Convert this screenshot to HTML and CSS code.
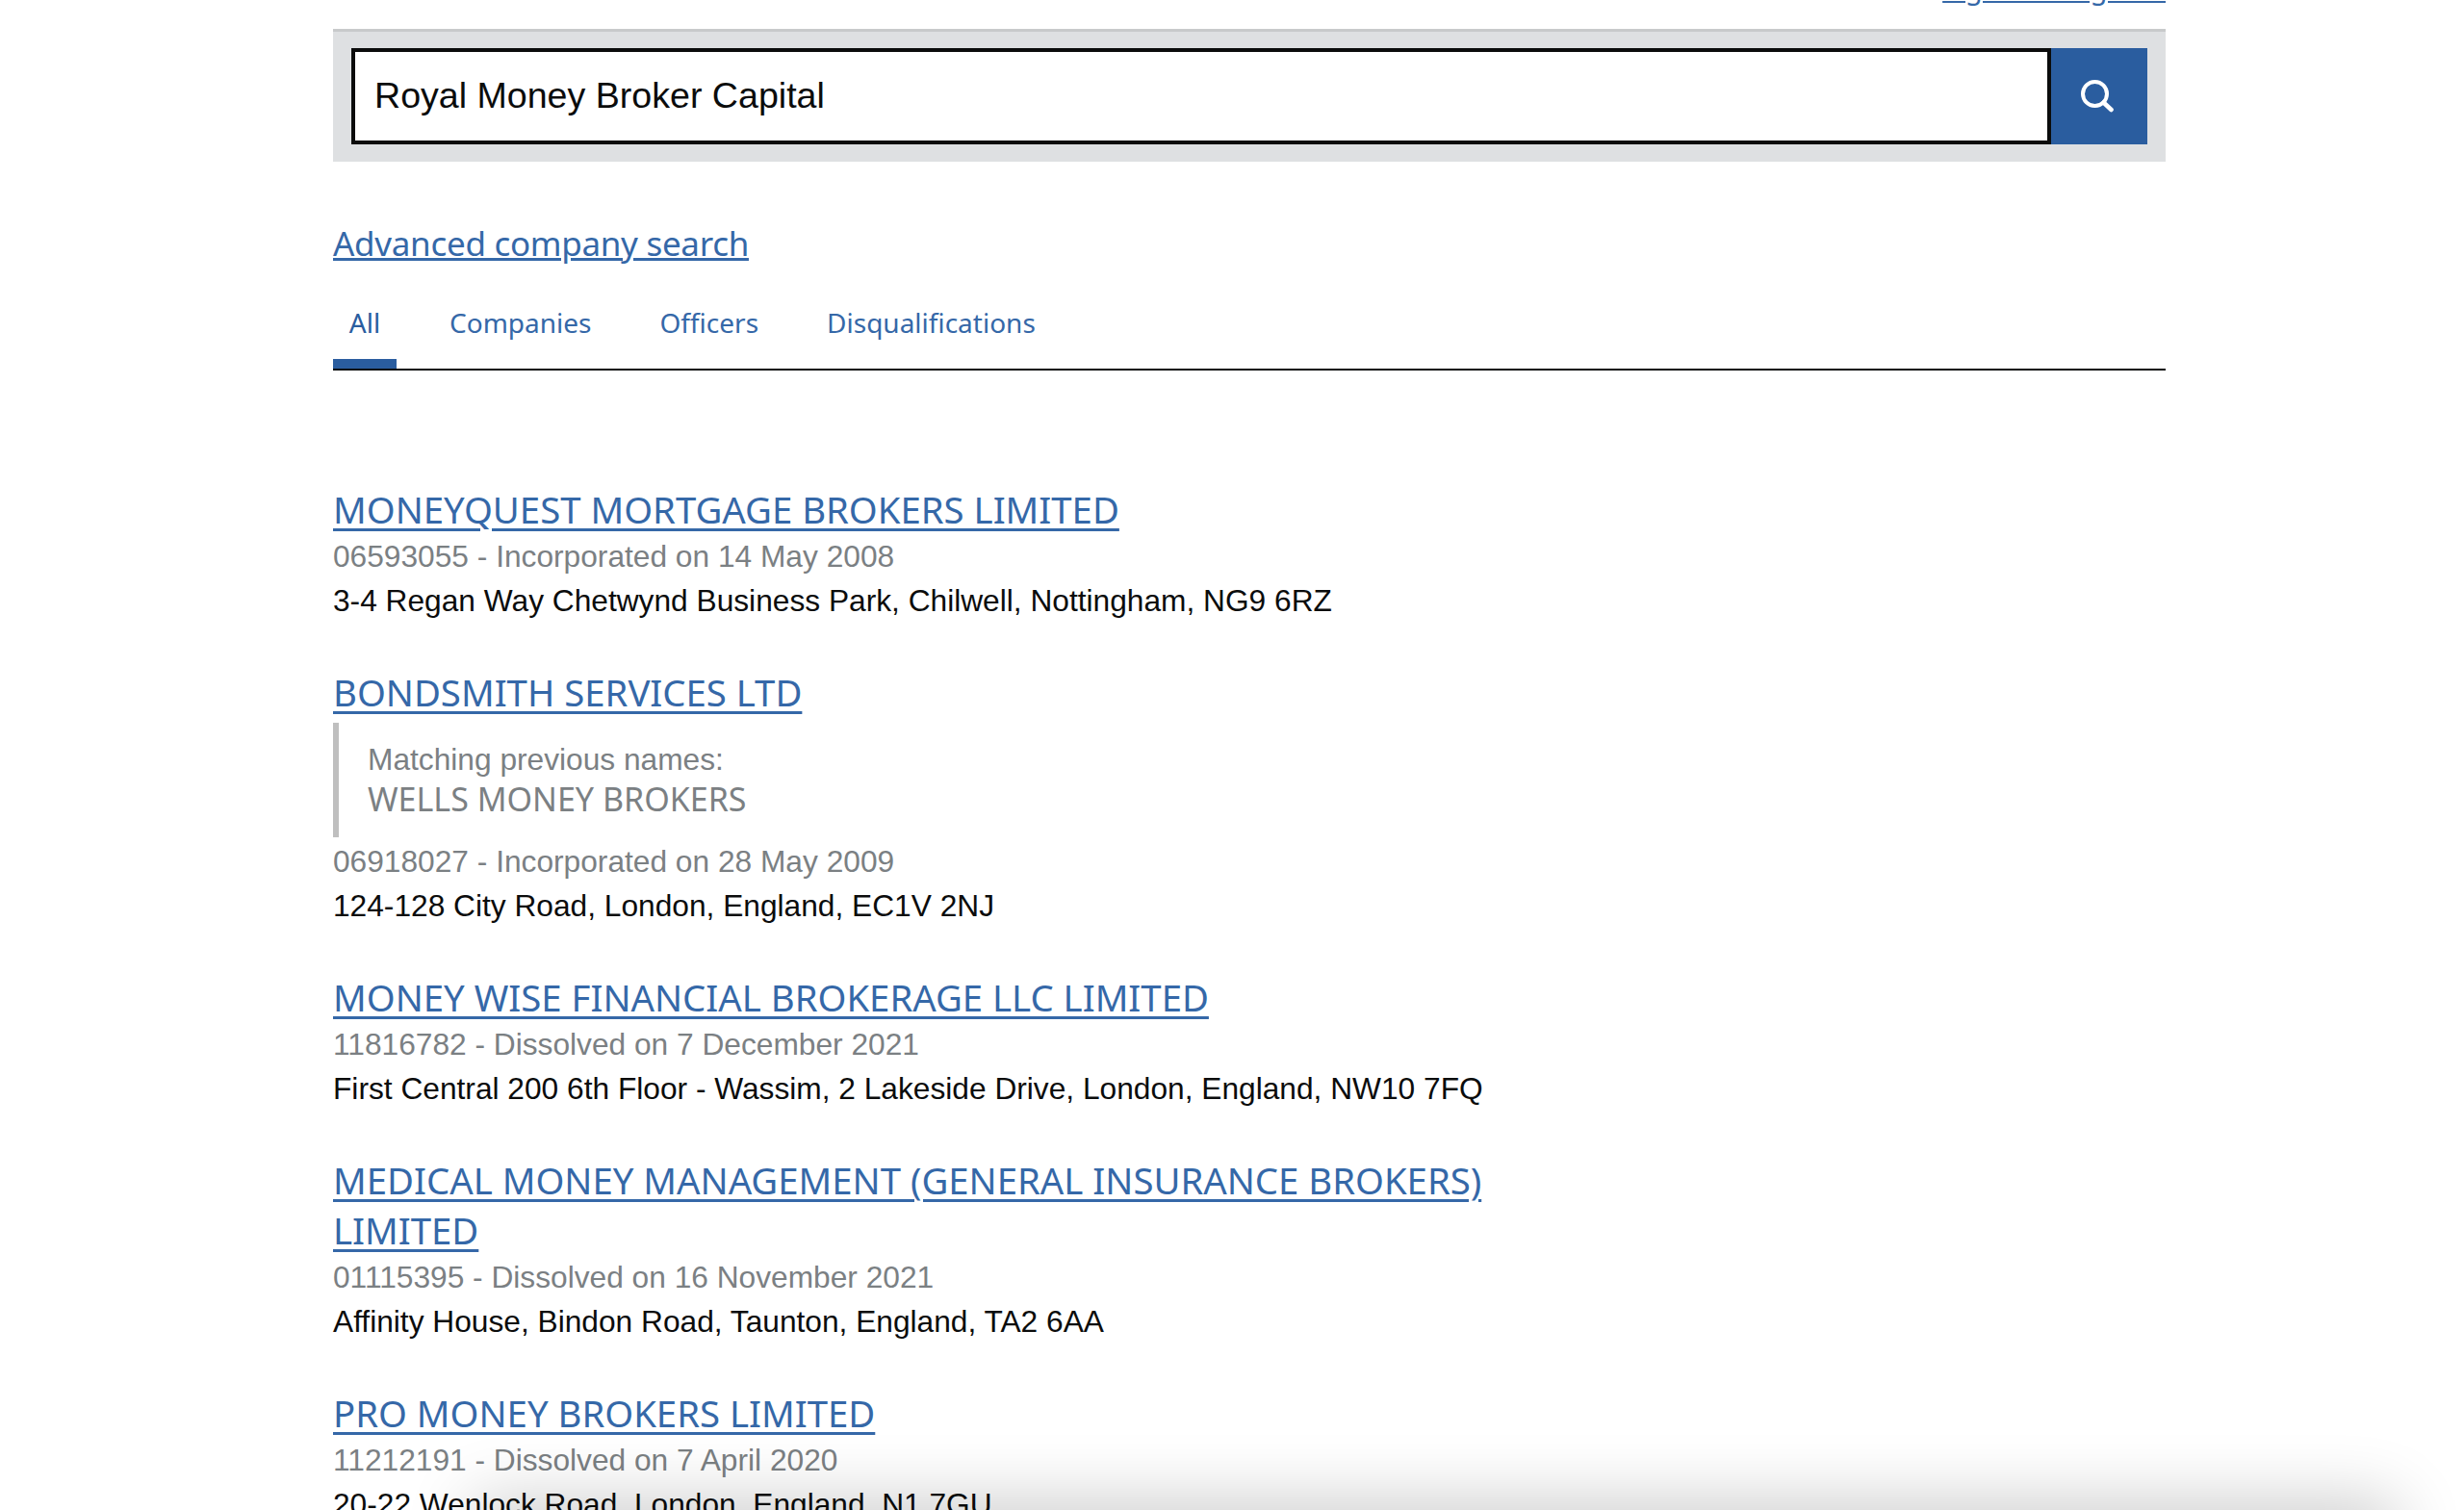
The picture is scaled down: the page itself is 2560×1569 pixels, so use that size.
FILE: index.html
```html
<!DOCTYPE html>
<html lang="en">
<head>
<meta charset="utf-8">
<title>Search results</title>
<link rel="stylesheet" href="styles.css">
</head>
<body>
<div class="page">
  <div class="top-link-row"><a class="top-link" href="#">Sign in / Register</a></div>
  <form class="search-panel">
    <div class="search-input">Royal Money Broker Capital</div>
    <button class="search-btn" type="button" aria-label="Search">
      <svg class="search-icon" width="34" height="34" viewBox="0 0 34 34" fill="none" stroke="#fff" stroke-width="4"><circle cx="14.5" cy="14.5" r="12.5"/><path d="M23.5 23.5 31.5 31" stroke-linecap="round" stroke-width="4.6"/></svg>
    </button>
  </form>
  <a class="advanced" href="#">Advanced company search</a>
  <nav class="tabs">
    <a class="tab active" href="#">All</a>
    <a class="tab" href="#">Companies</a>
    <a class="tab" href="#">Officers</a>
    <a class="tab" href="#">Disqualifications</a>
  </nav>
  <ul class="results">
    <li class="result">
      <a class="result-title" href="#">MONEYQUEST MORTGAGE BROKERS LIMITED</a>
      <p class="meta">06593055 - Incorporated on 14 May 2008</p>
      <p class="address">3-4 Regan Way Chetwynd Business Park, Chilwell, Nottingham, NG9 6RZ</p>
    </li>
    <li class="result">
      <a class="result-title" href="#">BONDSMITH SERVICES LTD</a>
      <div class="previous">
        <p class="previous-label">Matching previous names:</p>
        <p class="previous-name">WELLS MONEY BROKERS</p>
      </div>
      <p class="meta">06918027 - Incorporated on 28 May 2009</p>
      <p class="address">124-128 City Road, London, England, EC1V 2NJ</p>
    </li>
    <li class="result">
      <a class="result-title" href="#">MONEY WISE FINANCIAL BROKERAGE LLC LIMITED</a>
      <p class="meta">11816782 - Dissolved on 7 December 2021</p>
      <p class="address">First Central 200 6th Floor - Wassim, 2 Lakeside Drive, London, England, NW10 7FQ</p>
    </li>
    <li class="result">
      <a class="result-title" href="#">MEDICAL MONEY MANAGEMENT (GENERAL INSURANCE BROKERS) LIMITED</a>
      <p class="meta">01115395 - Dissolved on 16 November 2021</p>
      <p class="address">Affinity House, Bindon Road, Taunton, England, TA2 6AA</p>
    </li>
    <li class="result">
      <a class="result-title" href="#">PRO MONEY BROKERS LIMITED</a>
      <p class="meta">11212191 - Dissolved on 7 April 2020</p>
      <p class="address">20-22 Wenlock Road, London, England, N1 7GU</p>
    </li>
  </ul>
</div>
<div class="bottom-shadow"></div>
</body>
</html>
```
FILE: styles.css
```css
* { box-sizing: border-box; }
html, body { margin: 0; padding: 0; height: 1569px; overflow: hidden; background: #fff; }
body { font-family: "Liberation Sans", Arial, sans-serif; color: #0b0c0c; }
.page { width: 1904px; margin-left: 346px; }
p { margin: 0; }

.top-link-row { height: 30px; margin-top: -27px; margin-bottom: 27px; display: flex; justify-content: flex-end; }
.top-link { font-family: "Noto Sans", sans-serif; font-size: 29.2px; line-height: 30px; color: #3568a8; text-decoration: underline; }

.search-panel { display: flex; height: 138px; padding: 17px 19px 18px 19px; background: #dee0e2; border-top: 3px solid #c8cacb; }
.search-input { flex: 1; height: 100px; border: 4px solid #0b0c0c; background: #fff; font-size: 37.6px; line-height: 90px; padding-left: 20px; color: #0b0c0c; }
.search-btn { width: 100px; height: 100px; border: 0; padding: 0; background: #2a5d9f; display: flex; align-items: center; justify-content: center; }
.search-icon { margin-right: 4px; }

.advanced { display: block; margin-top: 60px; font-family: "Noto Sans", sans-serif; font-size: 35px; letter-spacing: -0.3px; line-height: 50px; color: #3568a8; text-decoration: underline; width: max-content; }

.tabs { display: flex; gap: 39px; margin-top: 30px; height: 77px; border-bottom: 2px solid #0b0c0c; }
.tab { padding: 0 16px; font-family: "Noto Sans", sans-serif; font-size: 28px; line-height: 54px; color: #3568a8; text-decoration: none; }
.tab.active { height: 75px; min-width: 66px; text-align: center; border-bottom: 10px solid #2a5d9f; color: #2a5d9f; }

.results { list-style: none; margin: 118px 0 0; padding: 0; width: 1240px; }
.result { margin-bottom: 46px; }
.result-title { font-family: "Noto Sans", sans-serif; font-size: 38.3px; line-height: 52px; color: #3568a8; text-decoration: underline; text-decoration-thickness: 3px; text-underline-offset: 5px; }
.meta { font-size: 31.7px; line-height: 46px; color: #7b8083; }
.address { font-size: 31.7px; line-height: 46px; color: #0b0c0c; }

.previous { margin: 6px 0 2px; padding: 18px 0 14px 30px; border-left: 6px solid #bfbfbf; height: 119px; color: #7b8083; }
.previous-label { font-size: 31.7px; line-height: 40px; }
.previous-name { font-family: "Noto Sans", sans-serif; font-size: 34px; line-height: 42px; }

.bottom-shadow { position: fixed; left: 500px; right: 80px; bottom: -60px; height: 60px; box-shadow: 0 0 70px 10px rgba(0,0,0,.2); }
```
